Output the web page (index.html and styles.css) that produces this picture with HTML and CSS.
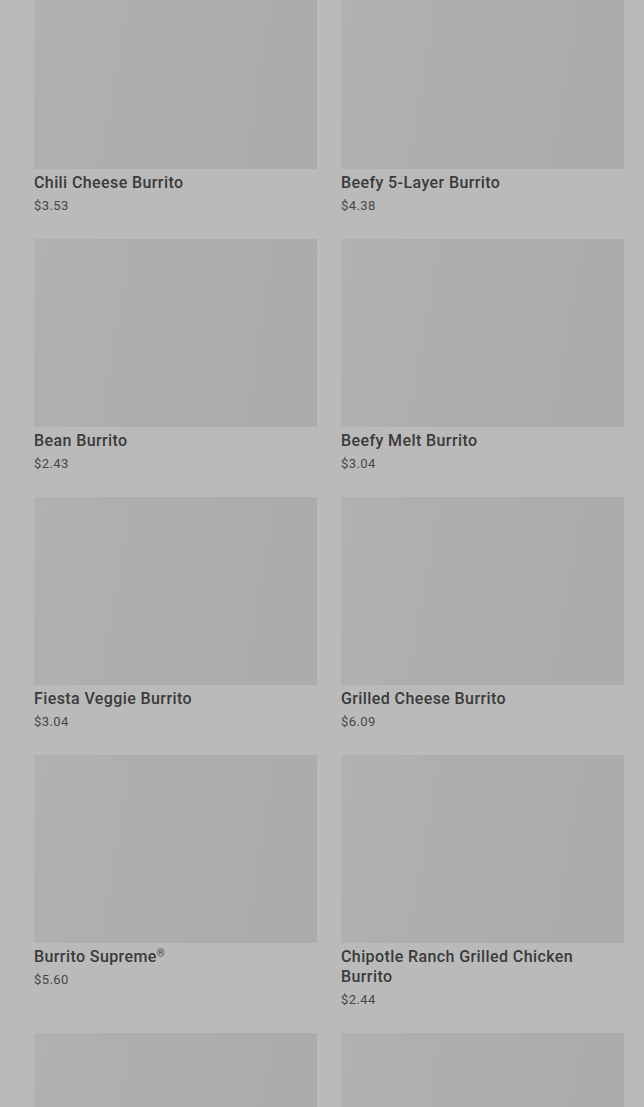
FILE: index.html
```html
<!DOCTYPE html>
<html lang="en">
<head>
    <meta charset="UTF-8">
    <meta name="viewport" content="width=device-width, initial-scale=1.0">
    <title>Burritos</title>
    <link rel="stylesheet" href="styles.css">
</head>
<body>
    <div class="menu">
        <div class="grid">
            <div class="item">
                <div class="photo"></div>
                <div class="name">Chili Cheese Burrito</div>
                <div class="price">$3.53</div>
            </div>
            <div class="item">
                <div class="photo"></div>
                <div class="name">Beefy 5-Layer Burrito</div>
                <div class="price">$4.38</div>
            </div>
            <div class="item">
                <div class="photo"></div>
                <div class="name">Bean Burrito</div>
                <div class="price">$2.43</div>
            </div>
            <div class="item">
                <div class="photo"></div>
                <div class="name">Beefy Melt Burrito</div>
                <div class="price">$3.04</div>
            </div>
            <div class="item">
                <div class="photo"></div>
                <div class="name">Fiesta Veggie Burrito</div>
                <div class="price">$3.04</div>
            </div>
            <div class="item">
                <div class="photo"></div>
                <div class="name">Grilled Cheese Burrito</div>
                <div class="price">$6.09</div>
            </div>
            <div class="item">
                <div class="photo"></div>
                <div class="name">Burrito Supreme<sup>&reg;</sup></div>
                <div class="price">$5.60</div>
            </div>
            <div class="item">
                <div class="photo"></div>
                <div class="name">Chipotle Ranch Grilled Chicken Burrito</div>
                <div class="price">$2.44</div>
            </div>
            <div class="item">
                <div class="photo"></div>
            </div>
            <div class="item">
                <div class="photo"></div>
            </div>
        </div>
    </div>
</body>
</html>
```

FILE: styles.css
```css
html, body {
    margin: 0;
    padding: 0;
    height: 100%;
    overflow: hidden;
}
body {
    font-family: Roboto, "Liberation Sans", sans-serif;
    background-color: #bababa;
    color: #383838;
}
.menu {
    padding: 0 20px 0 34px;
}
.grid {
    display: grid;
    grid-template-columns: 1fr 1fr;
    column-gap: 24px;
    row-gap: 23px;
    margin-top: -19px;
}
.photo {
    height: 188px;
    background: linear-gradient(100deg, #b1b1b1 0%, #adadad 45%, #ababab 100%);
}
.name {
    margin-top: 4px;
    font-size: 16px;
    font-weight: 500;
    line-height: 20px;
    letter-spacing: 0.4px;
    color: #3a3a3a;
}
.name sup {
    font-size: 10px;
    line-height: 0;
    vertical-align: 5px;
}
.price {
    margin-top: 3px;
    font-size: 13px;
    line-height: 20px;
    letter-spacing: 0.4px;
    color: #474747;
}
```
